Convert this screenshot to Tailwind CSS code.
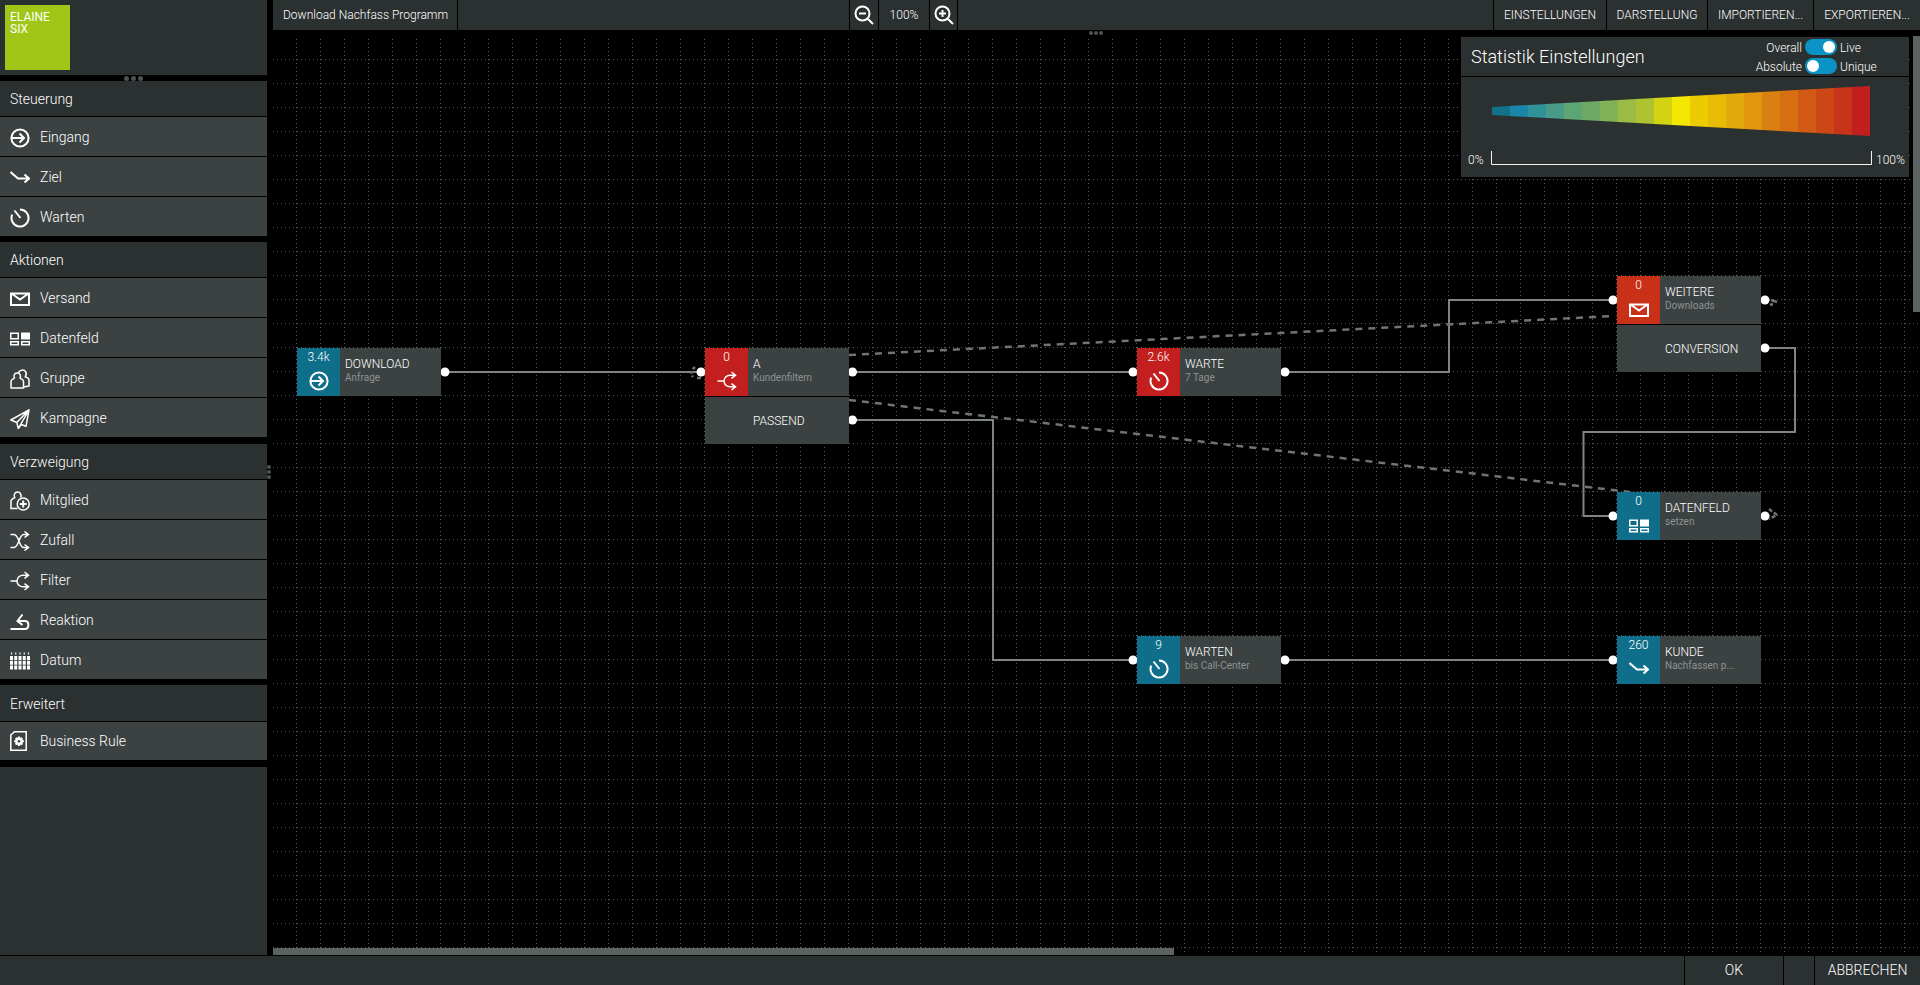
<!DOCTYPE html>
<html lang="de">
<head>
  <meta charset="UTF-8">
  <title>Download Nachfass Programm</title>
  <script src="https://cdn.jsdelivr.net/npm/@tailwindcss/browser@4"></script>
</head>
<body class="bg-black">
<!-- icon set -->
<svg class="hidden">
  <symbol id="i-eingang" viewBox="0 0 20 20"><g fill="none" stroke="currentColor" stroke-width="2"><circle cx="10" cy="10" r="8.600"/><path d="M1.500 10H14M9.500 5.500 14 10l-4.500 4.500"/></g></symbol>
  <symbol id="i-ziel" viewBox="0 0 20 20"><path fill="none" stroke="currentColor" stroke-width="2" d="M.5 4 8 10.500h11M14.500 6.500l4.500 4-4.500 4"/></symbol>
  <symbol id="i-warten" viewBox="0 0 20 20"><path fill="none" stroke="currentColor" stroke-width="2" d="M10 1.500a8.500 8.500 0 1 1-7.800 5.200M4.500 2.500l6 7.500"/></symbol>
  <symbol id="i-versand" viewBox="0 0 20 20"><path fill="none" stroke="currentColor" stroke-width="2" d="M1 4.500h18v11.500H1zM1.500 4.500 10 10.500l8.500-6"/></symbol>
  <symbol id="i-datenfeld" viewBox="0 0 20 20"><path fill="none" stroke="currentColor" stroke-width="1.500" d="M.75 4.250h7.500v5.500H.75zM.75 12.750h7.500v3H.75zM11.750 12.750h7.500v3h-7.500z"/><path fill="currentColor" d="M11 3.500h9v7h-9z"/></symbol>
  <symbol id="i-gruppe" viewBox="0 0 20 20"><path fill="none" stroke="currentColor" stroke-width="1.500" stroke-linejoin="round" d="M1 19v-6.500C1 10.500 3 10 4.500 9.200 3.500 7.500 3.800 4 7.200 4s3.800 3.500 2.800 5.200c1.500.8 3.500 1.300 3.500 3.300V19zM8.500 3.500C9.500.8 14 .3 15.500 2.500c1 1.500.7 3.800-.3 5.300 1.500.7 3.800 1.200 3.800 3.200V17l-5.500 1"/></symbol>
  <symbol id="i-kampagne" viewBox="0 0 20 20"><path fill="none" stroke="currentColor" stroke-width="1.500" stroke-linejoin="round" d="M19 .8.800 11l6 2.500 1.500 6 3-4 4.700 1.800zM19 .8 6.800 13.500M19 .8 8.300 19.500"/></symbol>
  <symbol id="i-mitglied" viewBox="0 0 20 20"><g fill="none" stroke="currentColor" stroke-width="1.500"><path d="M7.500 17.500H1V10c0-2 2.200-2.700 3.700-3.300C3.500 4.500 4.500 1 7.500 1s4.200 3 3.200 5.500"/><circle cx="13.200" cy="13" r="6"/><path stroke-width="2" d="M13.200 9.500v7M9.700 13h7"/></g></symbol>
  <symbol id="i-zufall" viewBox="0 0 20 20"><path fill="none" stroke="currentColor" stroke-width="1.500" d="M.5 3.500H4c5 0 5 13 9.500 13H18M.5 16.500H4c5 0 5-13 9.500-13H18M14.500.5l4 3-4 3M14.500 13.500l4 3-4 3"/></symbol>
  <symbol id="i-filter" viewBox="0 0 20 20"><path fill="none" stroke="currentColor" stroke-width="1.500" d="M.5 10H7M7 10c0-3.500 3-5.800 6-5.800h5M7 10c0 3.500 3 5.800 6 5.800h5M14.500 1l4 3.200-4 3.200M14.500 12.600l4 3.200-4 3.200"/></symbol>
  <symbol id="i-reaktion" viewBox="0 0 20 20"><path fill="none" stroke="currentColor" stroke-width="2" d="M.5 18H15c4.500 0 4.500-8 0-8H7.500M12.500 3.500 7.500 10l5 4"/></symbol>
  <symbol id="i-datum" viewBox="0 0 20 20"><path fill="none" stroke="currentColor" stroke-width="3" stroke-dasharray="4 .8" d="M1.500 5v14.400M5.750 5v14.400M10 5v14.400M14.250 5v14.400M18.500 5v14.400"/><path fill="none" stroke="currentColor" stroke-width="1.200" d="M1.500 1.500v2M5.750 1.500v2M10 1.500v2M14.250 1.500v2M18.500 1.500v2"/></symbol>
  <symbol id="i-rule" viewBox="0 0 20 20"><path fill="none" stroke="currentColor" stroke-width="1.500" d="M4.500 .8h11.700v18.400H.8V4z"/><path fill="currentColor" d="M8 5.500h2l.3 1.500 1.300-.7 1.400 1.400-.7 1.300 1.500.3v2l-1.500.3.700 1.300-1.400 1.400-1.300-.7-.3 1.500H8l-.3-1.500-1.300.7L5 12.900l.7-1.300-1.500-.3v-2l1.500-.3L5 7.700l1.400-1.400 1.300.7z"/><circle cx="9" cy="10.300" r="1.300" fill="#3c4242"/></symbol>
  <symbol id="i-zoomout" viewBox="0 0 20 20"><path fill="none" stroke="currentColor" stroke-width="2" d="M8.500 1.500a7 7 0 1 0 0 14 7 7 0 0 0 0-14zM5 8.500h7M13.500 13.500 19 19"/></symbol>
  <symbol id="i-zoomin" viewBox="0 0 20 20"><path fill="none" stroke="currentColor" stroke-width="2" d="M8.500 1.500a7 7 0 1 0 0 14 7 7 0 0 0 0-14zM5 8.500h7M8.500 5v7M13.500 13.500 19 19"/></symbol>
</svg>

<div class="flex flex-col w-[1920px] h-[985px] overflow-hidden font-[Roboto,sans-serif] font-light text-white">
  <div class="flex flex-1 min-h-0">

    <!-- Sidebar -->
    <aside class="w-[267px] flex flex-col">
      <div class="h-[75px] bg-[#2b3030] p-[5px]">
        <div class="w-[65px] h-[65px] bg-[#a2c617] pl-[5px] pt-[6px] text-[12px] leading-[12px] font-normal text-white">ELAINE<br>SIX</div>
      </div>
      <div class="h-[6px] flex items-center justify-center gap-[2px]">
        <i class="w-[5px] h-[5px] rounded-full bg-[#4d5252]"></i><i class="w-[5px] h-[5px] rounded-full bg-[#4d5252]"></i><i class="w-[5px] h-[5px] rounded-full bg-[#4d5252]"></i>
      </div>

      <section>
        <div class="h-[35px] bg-[#2b3030] pl-[10px] pt-[2px] flex items-center text-[14px]">Steuerung</div>
        <div class="h-[40px] border-t border-black bg-[#3c4242] pl-[10px] pt-[2px] flex items-center gap-[10px] text-[14px]"><svg class="w-5 h-5"><use href="#i-eingang"/></svg>Eingang</div>
        <div class="h-[40px] border-t border-black bg-[#3c4242] pl-[10px] pt-[2px] flex items-center gap-[10px] text-[14px]"><svg class="w-5 h-5"><use href="#i-ziel"/></svg>Ziel</div>
        <div class="h-[40px] border-t border-black bg-[#3c4242] pl-[10px] pt-[2px] flex items-center gap-[10px] text-[14px]"><svg class="w-5 h-5"><use href="#i-warten"/></svg>Warten</div>
      </section>

      <section class="mt-[6px]">
        <div class="h-[35px] bg-[#2b3030] pl-[10px] pt-[2px] flex items-center text-[14px]">Aktionen</div>
        <div class="h-[40px] border-t border-black bg-[#3c4242] pl-[10px] pt-[2px] flex items-center gap-[10px] text-[14px]"><svg class="w-5 h-5"><use href="#i-versand"/></svg>Versand</div>
        <div class="h-[40px] border-t border-black bg-[#3c4242] pl-[10px] pt-[2px] flex items-center gap-[10px] text-[14px]"><svg class="w-5 h-5"><use href="#i-datenfeld"/></svg>Datenfeld</div>
        <div class="h-[40px] border-t border-black bg-[#3c4242] pl-[10px] pt-[2px] flex items-center gap-[10px] text-[14px]"><svg class="w-5 h-5"><use href="#i-gruppe"/></svg>Gruppe</div>
        <div class="h-[40px] border-t border-black bg-[#3c4242] pl-[10px] pt-[2px] flex items-center gap-[10px] text-[14px]"><svg class="w-5 h-5"><use href="#i-kampagne"/></svg>Kampagne</div>
      </section>

      <section class="mt-[7px]">
        <div class="h-[35px] bg-[#2b3030] pl-[10px] pt-[2px] flex items-center text-[14px]">Verzweigung</div>
        <div class="h-[40px] border-t border-black bg-[#3c4242] pl-[10px] pt-[2px] flex items-center gap-[10px] text-[14px]"><svg class="w-5 h-5"><use href="#i-mitglied"/></svg>Mitglied</div>
        <div class="h-[40px] border-t border-black bg-[#3c4242] pl-[10px] pt-[2px] flex items-center gap-[10px] text-[14px]"><svg class="w-5 h-5"><use href="#i-zufall"/></svg>Zufall</div>
        <div class="h-[40px] border-t border-black bg-[#3c4242] pl-[10px] pt-[2px] flex items-center gap-[10px] text-[14px]"><svg class="w-5 h-5"><use href="#i-filter"/></svg>Filter</div>
        <div class="h-[40px] border-t border-black bg-[#3c4242] pl-[10px] pt-[2px] flex items-center gap-[10px] text-[14px]"><svg class="w-5 h-5"><use href="#i-reaktion"/></svg>Reaktion</div>
        <div class="h-[40px] border-t border-black bg-[#3c4242] pl-[10px] pt-[2px] flex items-center gap-[10px] text-[14px]"><svg class="w-5 h-5"><use href="#i-datum"/></svg>Datum</div>
      </section>

      <section class="mt-[6px]">
        <div class="h-[36px] bg-[#2b3030] pl-[10px] pt-[2px] flex items-center text-[14px]">Erweitert</div>
        <div class="h-[39px] border-t border-black bg-[#3c4242] pl-[10px] flex items-center gap-[10px] text-[14px]"><svg class="w-5 h-5"><use href="#i-rule"/></svg>Business Rule</div>
      </section>

      <div class="mt-[7px] flex-1 bg-[#2b3030]"></div>
    </aside>

    <!-- Main -->
    <main class="ml-[6px] flex-1 flex flex-col min-w-0">
      <header class="h-[30px] bg-[#2b3030] flex items-center text-[12px] shrink-0">
        <div class="w-[185px] h-full border-r border-black flex items-center pl-[10px]">Download Nachfass Programm</div>
        <div class="w-[391px] h-full"></div>
        <div class="w-[29px] h-full border-l border-black flex items-center justify-center"><svg class="w-[20px] h-[20px]"><use href="#i-zoomout"/></svg></div>
        <div class="w-[51px] h-full border-l border-black flex items-center justify-center">100%</div>
        <div class="w-[29px] h-full border-x border-black flex items-center justify-center"><svg class="w-[20px] h-[20px]"><use href="#i-zoomin"/></svg></div>
        <div class="flex-1 h-full"></div>
        <div class="w-[113px] h-full border-l border-black flex items-center justify-center">EINSTELLUNGEN</div>
        <div class="w-[101px] h-full border-l border-black flex items-center justify-center">DARSTELLUNG</div>
        <div class="w-[106px] h-full border-l border-black flex items-center justify-center">IMPORTIEREN...</div>
        <div class="w-[107px] h-full border-l border-black flex items-center justify-center">EXPORTIEREN...</div>
      </header>

      <!-- Canvas -->
      <div class="relative flex-1 min-h-0 overflow-hidden">
        <svg class="absolute inset-0 w-full h-full" viewBox="273 30 1647 925" fill="none">
          <defs>
            <pattern id="grid" patternUnits="userSpaceOnUse" x="273" y="30" width="24" height="24">
              <path d="M23.500 1V24M0 5.500H24" stroke="#555a5a" stroke-dasharray="1 3"/>
            </pattern>
          </defs>
          <rect x="273" y="39" width="1647" height="916" fill="url(#grid)"/>

          <g stroke="#7f8484" stroke-width="2">
            <path d="M445 372H701"/>
            <path d="M852 372H1133"/>
            <path d="M852 420H993V660H1133"/>
            <path d="M1285 372H1449V300H1613"/>
            <path d="M1765 348H1795V432H1583.500V516H1613"/>
            <path d="M1285 660H1613"/>
          </g>
          <g stroke="#6f7474" stroke-width="2.500" stroke-dasharray="7 6">
            <path d="M849 355 1614 316"/>
            <path d="M849 400 1655 495"/>
          </g>
          <g stroke="#6f7474" stroke-width="2.500">
            <path stroke-dasharray="3 2" d="M695 367Q689 372 693 377"/>
            <path d="M697 378h4"/>
            <path d="M1771 300l6 2M1770 305l3-1"/>
            <path stroke-dasharray="4 2" d="M1769 509l8 6-8 4"/>
          </g>

          <g fill="#fff">
            <circle cx="445" cy="372" r="4.500"/>
            <circle cx="701" cy="372" r="4.500"/>
            <circle cx="852.500" cy="372" r="4.500"/>
            <circle cx="852.500" cy="420" r="4.500"/>
            <circle cx="1133" cy="372" r="4.500"/>
            <circle cx="1285" cy="372" r="4.500"/>
            <circle cx="1613" cy="300" r="4.500"/>
            <circle cx="1765" cy="300" r="4.500"/>
            <circle cx="1765" cy="348" r="4.500"/>
            <circle cx="1613" cy="516" r="4.500"/>
            <circle cx="1765" cy="516" r="4.500"/>
            <circle cx="1133" cy="660" r="4.500"/>
            <circle cx="1285" cy="660" r="4.500"/>
            <circle cx="1613" cy="660" r="4.500"/>
          </g>
        </svg>

        <div class="absolute left-[816px] top-[1px] flex gap-[1px]">
          <i class="w-[4px] h-[4px] rounded-full bg-[#4d5252]"></i><i class="w-[4px] h-[4px] rounded-full bg-[#4d5252]"></i><i class="w-[4px] h-[4px] rounded-full bg-[#4d5252]"></i>
        </div>

        <!-- nodes -->
        <div class="absolute left-[24px] top-[318px] w-[144px] h-[48px] flex bg-[#3c4242]">
          <div class="w-[43px] bg-[#0f6f8a] flex flex-col items-center pt-[2px] text-[12px] leading-[14px]">3.4k<svg class="w-5 h-5 mt-[7px]"><use href="#i-eingang"/></svg></div>
          <div class="pl-[5px] pt-[9px]"><div class="text-[12px] leading-[14px]">DOWNLOAD</div><div class="text-[10px] leading-[14px] font-normal text-[#8c9292]">Anfrage</div></div>
        </div>

        <div class="absolute left-[432px] top-[318px] w-[144px] flex flex-col">
          <div class="h-[48px] flex bg-[#3c4242]">
            <div class="w-[43px] bg-[#c41f1f] flex flex-col items-center pt-[2px] text-[12px] leading-[14px]">0<svg class="w-5 h-5 mt-[7px]"><use href="#i-filter"/></svg></div>
            <div class="pl-[5px] pt-[9px]"><div class="text-[12px] leading-[14px]">A</div><div class="text-[10px] leading-[14px] font-normal text-[#8c9292]">Kundenfiltern</div></div>
          </div>
          <div class="h-[47px] mt-[1px] bg-[#3c4242] flex items-center pl-[48px] text-[12px]">PASSEND</div>
        </div>

        <div class="absolute left-[864px] top-[318px] w-[144px] h-[48px] flex bg-[#3c4242]">
          <div class="w-[43px] bg-[#c41f1f] flex flex-col items-center pt-[2px] text-[12px] leading-[14px]">2.6k<svg class="w-5 h-5 mt-[7px]"><use href="#i-warten"/></svg></div>
          <div class="pl-[5px] pt-[9px]"><div class="text-[12px] leading-[14px]">WARTE</div><div class="text-[10px] leading-[14px] font-normal text-[#8c9292]">7 Tage</div></div>
        </div>

        <div class="absolute left-[1344px] top-[246px] w-[144px] flex flex-col">
          <div class="h-[48px] flex bg-[#3c4242]">
            <div class="w-[43px] bg-[#c93018] flex flex-col items-center pt-[2px] text-[12px] leading-[14px]">0<svg class="w-5 h-5 mt-[8px]"><use href="#i-versand"/></svg></div>
            <div class="pl-[5px] pt-[9px]"><div class="text-[12px] leading-[14px]">WEITERE</div><div class="text-[10px] leading-[14px] font-normal text-[#8c9292]">Downloads</div></div>
          </div>
          <div class="h-[47px] mt-[1px] bg-[#3c4242] flex items-center pl-[48px] text-[12px]">CONVERSION</div>
        </div>

        <div class="absolute left-[1344px] top-[462px] w-[144px] h-[48px] flex bg-[#3c4242]">
          <div class="w-[43px] bg-[#0f6f8a] flex flex-col items-center pt-[2px] text-[12px] leading-[14px]">0<svg class="w-5 h-5 mt-[8px]"><use href="#i-datenfeld"/></svg></div>
          <div class="pl-[5px] pt-[9px]"><div class="text-[12px] leading-[14px]">DATENFELD</div><div class="text-[10px] leading-[14px] font-normal text-[#8c9292]">setzen</div></div>
        </div>

        <div class="absolute left-[864px] top-[606px] w-[144px] h-[48px] flex bg-[#3c4242]">
          <div class="w-[43px] bg-[#0f6f8a] flex flex-col items-center pt-[2px] text-[12px] leading-[14px]">9<svg class="w-5 h-5 mt-[7px]"><use href="#i-warten"/></svg></div>
          <div class="pl-[5px] pt-[9px]"><div class="text-[12px] leading-[14px]">WARTEN</div><div class="text-[10px] leading-[14px] font-normal text-[#8c9292]">bis Call-Center</div></div>
        </div>

        <div class="absolute left-[1344px] top-[606px] w-[144px] h-[48px] flex bg-[#3c4242]">
          <div class="w-[43px] bg-[#0f6f8a] flex flex-col items-center pt-[2px] text-[12px] leading-[14px]">260<svg class="w-5 h-5 mt-[7px]"><use href="#i-ziel"/></svg></div>
          <div class="pl-[5px] pt-[9px]"><div class="text-[12px] leading-[14px]">KUNDE</div><div class="text-[10px] leading-[14px] font-normal text-[#8c9292]">Nachfassen p...</div></div>
        </div>

        <!-- stats panel -->
        <div class="absolute left-[1188px] top-[7px] w-[448px] h-[140px] bg-[#2b3030] flex flex-col">
          <div class="h-[40px] border-b border-black flex items-start pl-[10px] shrink-0">
            <div class="text-[18px] font-light leading-[39px]">Statistik Einstellungen</div>
            <div class="ml-auto mr-[32px] pt-[2px] grid grid-cols-[70px_32px_37px] gap-x-[3px] gap-y-[3px] text-[12px] leading-[19px]">
              <span class="h-[16px] text-right">Overall</span>
              <span class="h-[16px] rounded-full bg-[#0a93c4] flex items-center justify-end pr-[2px]"><i class="w-[12px] h-[12px] rounded-full bg-white"></i></span>
              <span class="h-[16px]">Live</span>
              <span class="h-[16px] text-right">Absolute</span>
              <span class="h-[16px] rounded-full bg-[#0a93c4] flex items-center pl-[2px]"><i class="w-[12px] h-[12px] rounded-full bg-white"></i></span>
              <span class="h-[16px]">Unique</span>
            </div>
          </div>
          <svg class="block w-[448px] h-[100px]" viewBox="1461 77 448 100">
            <defs><clipPath id="funnel"><polygon points="1492,107 1870,86 1870,136 1492,115"/></clipPath></defs>
            <g clip-path="url(#funnel)">
              <rect x="1492" y="80" width="18.500" height="60" fill="#127289"/>
              <rect x="1510" y="80" width="18.500" height="60" fill="#1a87a8"/>
              <rect x="1528" y="80" width="18.500" height="60" fill="#2f9298"/>
              <rect x="1546" y="80" width="18.500" height="60" fill="#479b88"/>
              <rect x="1564" y="80" width="18.500" height="60" fill="#5da573"/>
              <rect x="1582" y="80" width="18.500" height="60" fill="#6ea865"/>
              <rect x="1600" y="80" width="18.500" height="60" fill="#82b055"/>
              <rect x="1618" y="80" width="18.500" height="60" fill="#9bbb45"/>
              <rect x="1636" y="80" width="18.500" height="60" fill="#afc332"/>
              <rect x="1654" y="80" width="18.500" height="60" fill="#d3d312"/>
              <rect x="1672" y="80" width="18.500" height="60" fill="#f3e600"/>
              <rect x="1690" y="80" width="18.500" height="60" fill="#eccc00"/>
              <rect x="1708" y="80" width="18.500" height="60" fill="#e8bb05"/>
              <rect x="1726" y="80" width="18.500" height="60" fill="#e4a90a"/>
              <rect x="1744" y="80" width="18.500" height="60" fill="#e0960e"/>
              <rect x="1762" y="80" width="18.500" height="60" fill="#da8010"/>
              <rect x="1780" y="80" width="18.500" height="60" fill="#d66f12"/>
              <rect x="1798" y="80" width="18.500" height="60" fill="#d25a14"/>
              <rect x="1816" y="80" width="18.500" height="60" fill="#cc4716"/>
              <rect x="1834" y="80" width="18.500" height="60" fill="#c8341a"/>
              <rect x="1852" y="80" width="18" height="60" fill="#c11f1f"/>
            </g>
            <path d="M1491.500 151V164.500H1871.500V151" fill="none" stroke="#f2f2f2"/>
            <text x="1468" y="164" font-size="12" fill="#fff">0%</text>
            <text x="1876" y="164" font-size="12" fill="#fff">100%</text>
          </svg>
        </div>

        <!-- scrollbars -->
        <div class="absolute right-0 top-[6px] w-[7px] h-[276px] bg-[#5a6262]"></div>
        <div class="absolute left-0 bottom-0 w-[901px] h-[7px] bg-[#5a6262]"></div>
      </div>
    </main>
  </div>

  <!-- Splitter on the sidebar edge -->
  <div class="absolute left-[267px] top-[465px] flex flex-col gap-[1px]">
    <i class="w-[4px] h-[4px] rounded-full bg-[#4d5252]"></i><i class="w-[4px] h-[4px] rounded-full bg-[#4d5252]"></i><i class="w-[4px] h-[4px] rounded-full bg-[#4d5252]"></i>
  </div>

  <footer class="h-[30px] border-t border-black bg-[#2b3030] flex justify-end text-[14px] shrink-0">
    <div class="w-[99px] border-l border-black flex items-center justify-center">OK</div>
    <div class="w-[31px] border-l border-black"></div>
    <div class="w-[106px] border-l border-black flex items-center justify-center">ABBRECHEN</div>
  </footer>
</div>
</body>
</html>
